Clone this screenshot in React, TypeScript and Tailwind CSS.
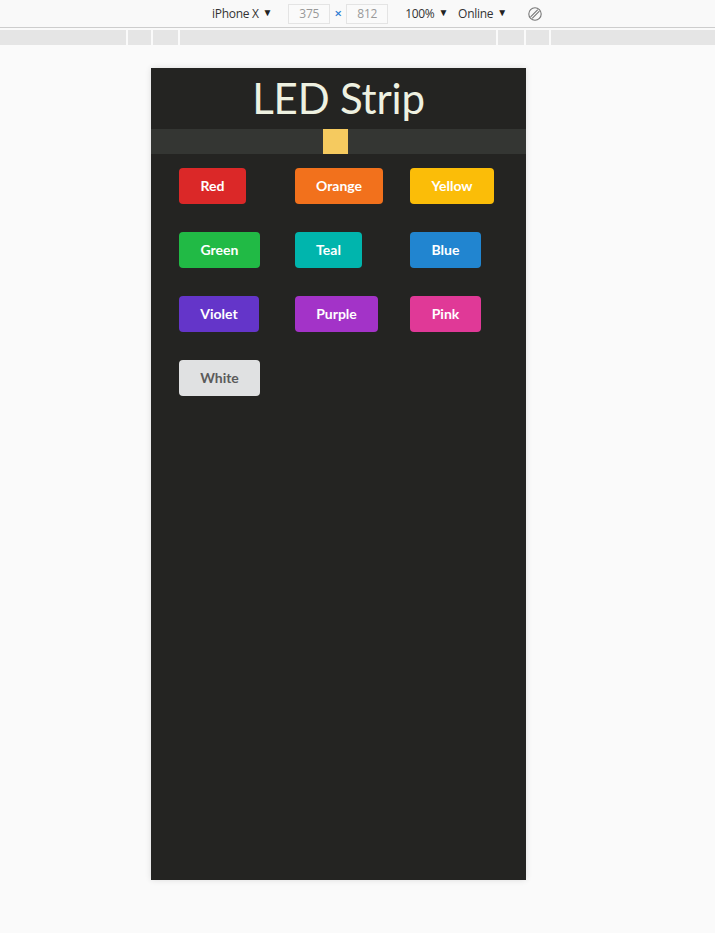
import React from "react";

const buttons: { label: string; bg: string; w: string; text?: string }[] = [
  { label: "Red", bg: "bg-[#db2828]", w: "w-[67px]" },
  { label: "Orange", bg: "bg-[#f2711c]", w: "w-[88px]" },
  { label: "Yellow", bg: "bg-[#fbbd08]", w: "w-[84px]" },
  { label: "Green", bg: "bg-[#21ba45]", w: "w-[81px]" },
  { label: "Teal", bg: "bg-[#00b5ad]", w: "w-[67px]" },
  { label: "Blue", bg: "bg-[#2185d0]", w: "w-[71px]" },
  { label: "Violet", bg: "bg-[#6435c9]", w: "w-[80px]" },
  { label: "Purple", bg: "bg-[#a333c8]", w: "w-[83px]" },
  { label: "Pink", bg: "bg-[#e03997]", w: "w-[71px]" },
  { label: "White", bg: "bg-[#e0e1e2]", w: "w-[81px]", text: "text-[#5b5b5b]" },
];

function Caret() {
  return <span className="text-[10px] ml-[4px] relative top-[-1px] text-[#222]">▼</span>;
}

export default function App() {
  return (
    <div className="w-[715px] h-[933px] bg-[#fafafa] overflow-hidden font-['Open_Sans','Noto_Sans',sans-serif]">
      {/* toolbar */}
      <div className="h-[28px] bg-[#f9f9f9] border-b border-[#cdcdcd] flex items-center text-[12px] text-[#333] tracking-[-0.3px]">
        <div className="ml-[212px] flex items-center">
          iPhone X<Caret />
        </div>
        <div className="ml-[16px] w-[42px] h-[20px] border border-[#e4e4e4] bg-[#fafafa] flex items-center justify-center text-[#999]">375</div>
        <div className="w-[16px] text-center text-[#2b7bd2] text-[13px] font-semibold">×</div>
        <div className="w-[42px] h-[20px] border border-[#e4e4e4] bg-[#fafafa] flex items-center justify-center text-[#999]">812</div>
        <div className="ml-[17px] flex items-center">
          100%<Caret />
        </div>
        <div className="ml-[10px] flex items-center">
          Online<Caret />
        </div>
        <svg className="ml-[20px]" width="16" height="16" viewBox="0 0 16 16" fill="none" stroke="#777" strokeWidth="1.1">
          <circle cx="8" cy="8" r="6.2" />
          <path d="M3.6 10.8 L10.8 3.6 M5.2 12.4 L12.4 5.2" />
        </svg>
      </div>
      {/* ruler */}
      <div className="mt-[2px] h-[15px] flex gap-[2px] bg-[#fafafa]">
        <div className="w-[126px] bg-[#e5e5e5]" />
        <div className="w-[23px] bg-[#e5e5e5]" />
        <div className="w-[25px] bg-[#e5e5e5]" />
        <div className="w-[316px] bg-[#e5e5e5]" />
        <div className="w-[26px] bg-[#e5e5e5]" />
        <div className="w-[23px] bg-[#e5e5e5]" />
        <div className="flex-1 bg-[#e5e5e5]" />
      </div>
      {/* device */}
      <div className="pl-[151px] pt-[23px]">
        <div className="w-[375px] h-[812px] bg-[#242422] shadow-[0_0_6px_rgba(0,0,0,0.12)] font-['Lato',sans-serif]">
          <div className="h-[61px] flex items-center justify-center">
            <h1 className="text-[42px] font-normal leading-none text-[#eef1e1] tracking-[-0.2px] pb-[1px]">LED Strip</h1>
          </div>
          <div className="h-[25px] bg-[#343633] flex">
            <div className="ml-[172px] w-[25px] h-[25px] bg-[#f5ca5f]" />
          </div>
          <div className="pt-[14px] pl-[28px] grid grid-cols-[116px_115px_1fr] gap-y-[28px]">
            {buttons.map((b) => (
              <div key={b.label}>
                <button
                  className={`${b.bg} ${b.w} ${b.text ?? "text-white"} h-[36px] rounded-[4px] text-[14px] font-bold leading-none flex items-center justify-center`}
                >
                  {b.label}
                </button>
              </div>
            ))}
          </div>
        </div>
      </div>
    </div>
  );
}
